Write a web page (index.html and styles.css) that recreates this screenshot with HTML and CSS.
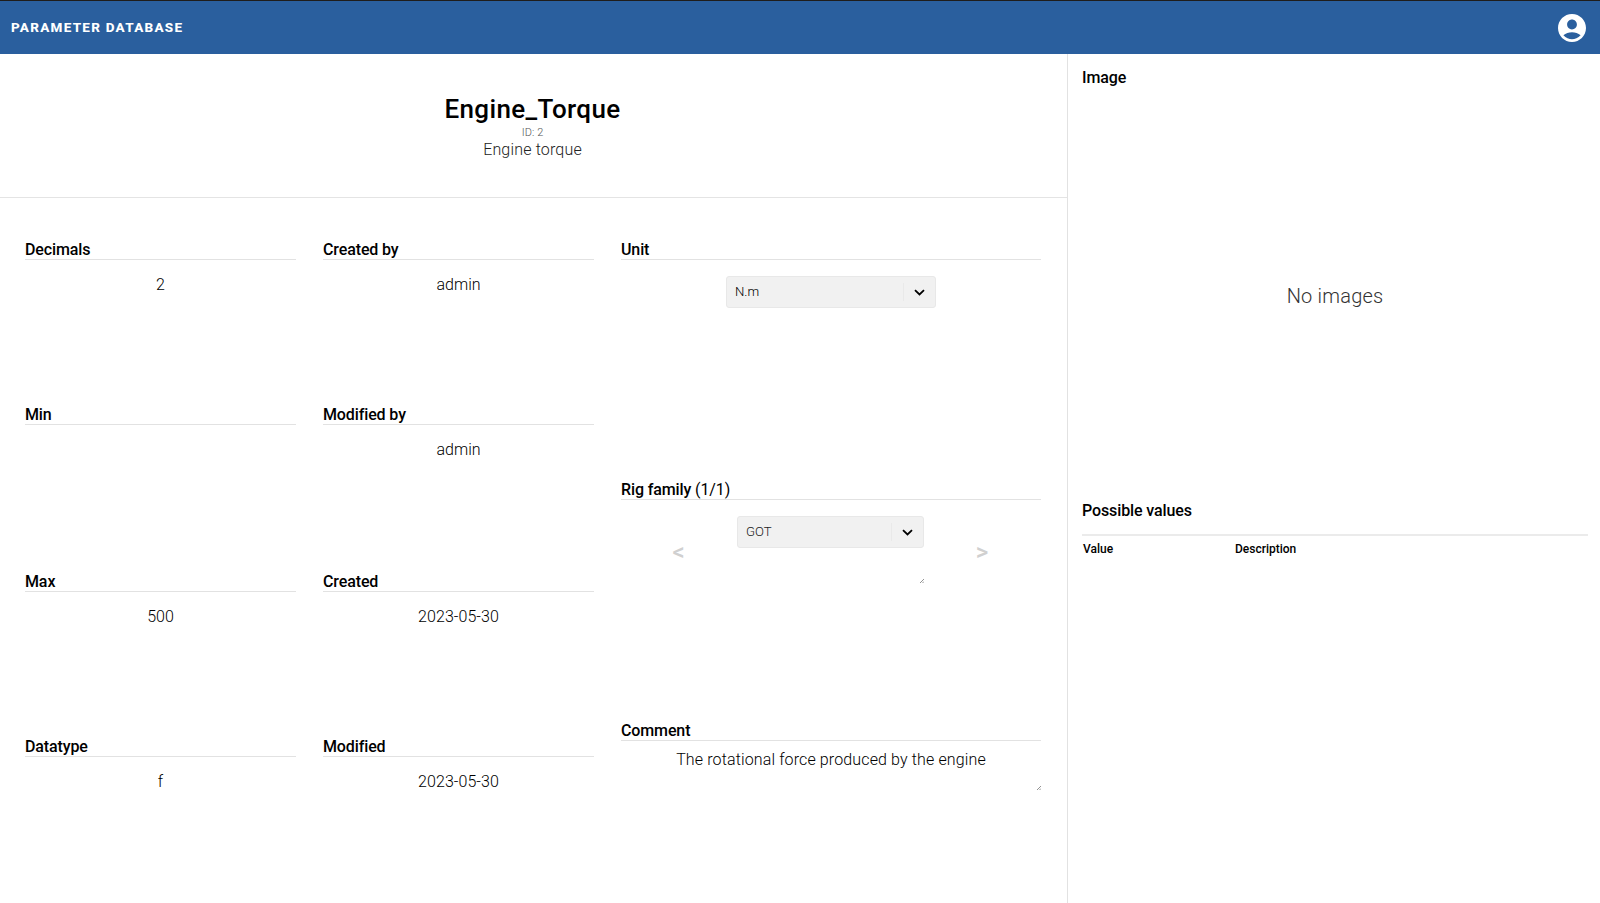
FILE: index.html
```html
<!DOCTYPE html>
<html lang="en">
<head>
<meta charset="utf-8">
<title>Parameter Database</title>
<link rel="stylesheet" href="styles.css">
</head>
<body>
<header class="topbar">
  <span class="brand">PARAMETER DATABASE</span>
  <svg class="account" viewBox="2 2 20 20" aria-hidden="true"><path fill="#fff" d="M12 2C6.48 2 2 6.48 2 12s4.48 10 10 10 10-4.48 10-10S17.52 2 12 2zm0 4c1.93 0 3.5 1.57 3.5 3.5S13.93 13 12 13s-3.500-1.570-3.500-3.500S10.070 6 12 6zm0 14c-2.030 0-4.430-.82-6.140-2.880C7.550 15.800 9.680 15 12 15s4.450.8 6.140 2.120C16.430 19.180 14.030 20 12 20z"/></svg>
</header>
<main class="content">
  <section class="details">
    <div class="hero">
      <h1 class="name">Engine_Torque</h1>
      <div class="ident">ID: 2</div>
      <div class="summary">Engine torque</div>
    </div>
    <div class="columns">
      <div class="column four">
        <div class="field"><h2 class="label">Decimals</h2><p class="value">2</p></div>
        <div class="field"><h2 class="label">Min</h2></div>
        <div class="field"><h2 class="label">Max</h2><p class="value">500</p></div>
        <div class="field"><h2 class="label">Datatype</h2><p class="value">f</p></div>
      </div>
      <div class="column four">
        <div class="field"><h2 class="label">Created by</h2><p class="value">admin</p></div>
        <div class="field"><h2 class="label">Modified by</h2><p class="value">admin</p></div>
        <div class="field"><h2 class="label">Created</h2><p class="value date">2023-05-30</p></div>
        <div class="field"><h2 class="label">Modified</h2><p class="value date">2023-05-30</p></div>
      </div>
      <div class="column three">
        <div class="field">
          <h2 class="label">Unit</h2>
          <div class="select unit"><span class="choice dark">N.m</span><span class="arrow"><svg viewBox="0 0 11 7"><path d="M1 1.200l4.500 4.300 4.500-4.300"/></svg></span></div>
        </div>
        <div class="field">
          <h2 class="label">Rig family <span class="count">(1/1)</span></h2>
          <div class="rig">
            <span class="step">&lt;</span>
            <div class="family">
              <div class="select"><span class="choice">GOT</span><span class="arrow"><svg viewBox="0 0 11 7"><path d="M1 1.200l4.500 4.300 4.500-4.300"/></svg></span></div>
              <svg class="grip" viewBox="0 0 4 4"><path d="M0 4L4 0M2.500 4L4 2.500"/></svg>
            </div>
            <span class="step">&gt;</span>
          </div>
        </div>
        <div class="field">
          <h2 class="label">Comment</h2>
          <div class="comment"><p>The rotational force produced by the engine</p><svg class="grip" viewBox="0 0 4 4"><path d="M0 4L4 0M2.500 4L4 2.500"/></svg></div>
        </div>
      </div>
    </div>
  </section>
  <aside class="side">
    <div class="images"><h2 class="heading">Image</h2><div class="empty">No images</div></div>
    <h2 class="heading">Possible values</h2>
    <div class="table-head"><span>Value</span><span>Description</span></div>
  </aside>
</main>
</body>
</html>
```
FILE: styles.css
```css
* { box-sizing: border-box; }
body { margin: 0; height: 903px; overflow: hidden; background: #fff; color: #000; font-family: Roboto, sans-serif; display: flex; flex-direction: column; }
h1, h2, p { margin: 0; font-weight: inherit; }
svg { display: block; }

.topbar { height: 54px; flex: none; display: flex; align-items: center; justify-content: space-between; padding: 0 14px 0 11px; background: #2a5f9e; border-top: 1px solid #1f1d1b; }
.brand { color: #fff; font-size: 13.5px; font-weight: 800; letter-spacing: 1.250px; padding-bottom: 2px; }
.account { width: 28px; height: 28px; }

.content { flex: 1; min-height: 0; display: grid; grid-template-columns: 1068px 1fr; }
.details { border-right: 1px solid #e2e2e2; }
.hero { height: 144px; padding-top: 39px; padding-right: 2px; border-bottom: 1px solid #e4e4e4; text-align: center; }
.name { font-size: 26px; line-height: 32px; font-weight: 500; letter-spacing: .35px; }
.ident { font-size: 11px; line-height: 15px; font-weight: 300; color: #555; letter-spacing: .1px; }
.summary { font-size: 16px; line-height: 19px; font-weight: 300; color: #222; letter-spacing: .17px; }

.columns { display: grid; grid-template-columns: 271px 271px 420px; column-gap: 27px; padding: 38px 0 0 25px; }
.column { display: grid; height: 662px; }
.four { grid-template-rows: 165px 167px 165px 165px; }
.three { grid-template-rows: 240px 241px 181px; }
.label { height: 24px; line-height: 27px; font-size: 16px; font-weight: 500; letter-spacing: -.12px; border-bottom: 1px solid #e2e2e2; }
.count { font-weight: 400; }
.value { padding-top: 14px; font-size: 16px; line-height: 22px; font-weight: 300; text-align: center; }
.date { letter-spacing: .06px; }

.select { height: 32px; display: flex; align-items: center; background: #f1f1f1; border: 1px solid #e8e8e8; border-radius: 3px; padding-left: 8px; }
.unit { width: 210px; margin: 16px auto 0; }
.choice { flex: 1; font-size: 13.2px; line-height: 16px; padding-bottom: 1px; font-weight: 300; color: #222; }
.dark { color: #000; }
.arrow { width: 32px; height: 18px; border-left: 1px solid #e9e9e9; display: grid; place-items: center; }
.arrow svg { width: 11px; height: 7px; fill: none; stroke: #000; stroke-width: 1.8; }
.rig { display: grid; grid-template-columns: 116px 187px 117px; padding-top: 16px; }
.step { padding-top: 22px; padding-right: 1px; font-size: 24px; line-height: 28px; font-weight: 500; color: #d0d0d0; text-align: center; }
.family { height: 67px; display: flex; flex-direction: column; justify-content: space-between; }
.grip { width: 4px; height: 4px; align-self: flex-end; fill: none; stroke: #777; stroke-width: .8; }
.comment { height: 49px; padding-top: 8px; display: flex; flex-direction: column; justify-content: space-between; text-align: center; font-size: 16px; line-height: 22px; font-weight: 300; letter-spacing: .13px; }

.side { padding: 12px 12px 0 14px; }
.images { height: 433px; display: flex; flex-direction: column; }
.heading { font-size: 16px; line-height: 24px; font-weight: 500; letter-spacing: -.12px; }
.empty { padding-top: 193px; text-align: center; font-size: 20px; line-height: 26px; font-weight: 300; color: #333; letter-spacing: .2px; }
.table-head { margin-top: 11px; border-top: 2px solid #ebebeb; padding: 4px 0 0 1px; display: grid; grid-template-columns: 152px 1fr; font-size: 12px; line-height: 18px; font-weight: 500; }
```
